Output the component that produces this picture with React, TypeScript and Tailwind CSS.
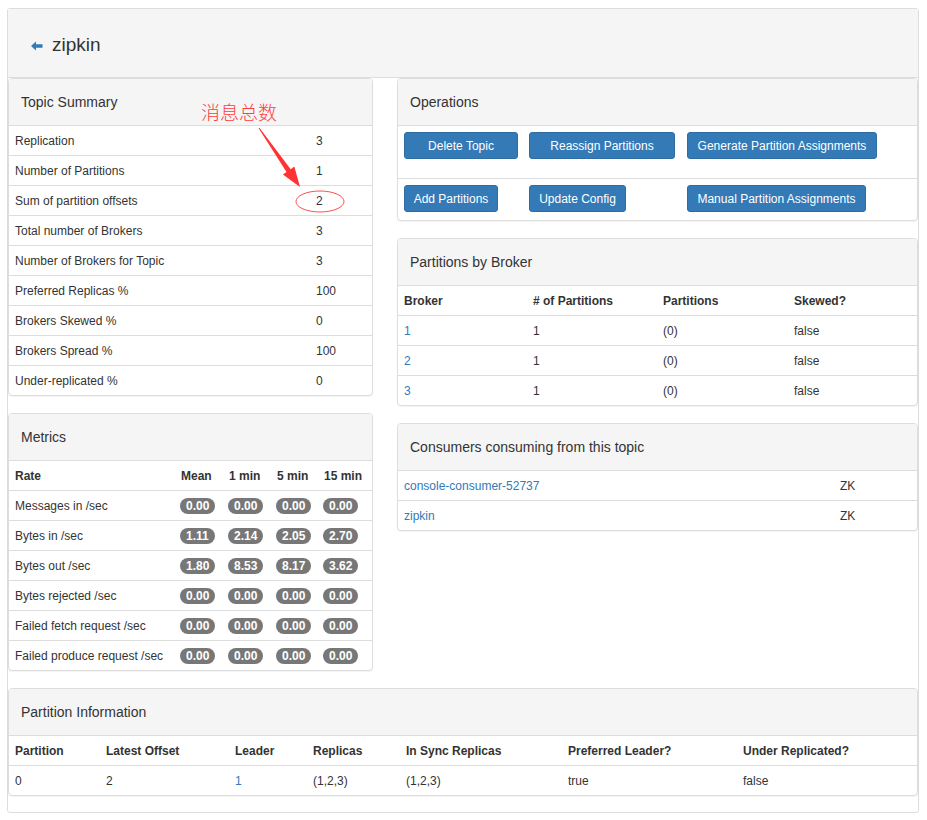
import React from 'react';

const summary: [string, string][] = [
    ['Replication', '3'],
    ['Number of Partitions', '1'],
    ['Sum of partition offsets', '2'],
    ['Total number of Brokers', '3'],
    ['Number of Brokers for Topic', '3'],
    ['Preferred Replicas %', '100'],
    ['Brokers Skewed %', '0'],
    ['Brokers Spread %', '100'],
    ['Under-replicated %', '0'],
];

const metrics: [string, string[]][] = [
    ['Messages in /sec', ['0.00', '0.00', '0.00', '0.00']],
    ['Bytes in /sec', ['1.11', '2.14', '2.05', '2.70']],
    ['Bytes out /sec', ['1.80', '8.53', '8.17', '3.62']],
    ['Bytes rejected /sec', ['0.00', '0.00', '0.00', '0.00']],
    ['Failed fetch request /sec', ['0.00', '0.00', '0.00', '0.00']],
    ['Failed produce request /sec', ['0.00', '0.00', '0.00', '0.00']],
];

const btn = 'h-[27px] rounded-[3px] bg-[#337ab7] border border-[#2e6da4] text-white text-[12px] flex items-center justify-center';

function Panel({ title, children }: { title: string; children: React.ReactNode }) {
    return (
        <div className="border border-[#ddd] rounded-[4px] bg-white shadow-[0_1px_1px_rgba(0,0,0,0.05)] overflow-hidden">
            <div className="h-[47px] bg-[#f5f5f5] border-b border-[#ddd] flex items-center pl-[12px] text-[14px]">
                {title}
            </div>
            {children}
        </div>
    );
}

function Row({ cols, children, head }: { cols: string; children: React.ReactNode; head?: boolean }) {
    return (
        <div className={`grid ${cols} h-[30px] items-center border-b border-[#ddd] last:border-b-0 last:h-[29px] ${head ? 'font-bold' : ''}`}>
            {children}
        </div>
    );
}

function Badge({ v }: { v: string }) {
    return (
        <span className="inline-block bg-[#777] text-white font-bold text-[12px] leading-none rounded-[10px] px-[6px] py-[2px]">
            {v}
        </span>
    );
}

export default function App() {
    return (
        <div className="min-h-[820px] bg-white pt-[8px] pb-[8px] pl-[7px] pr-[8px] text-[12px] text-[#333] font-['Liberation_Sans',Arial,sans-serif]">
            <div className="border border-[#ddd] rounded-[3px] bg-white relative">
                {/* Title */}
                <div className="h-[69px] bg-[#f5f5f5] border-b border-[#ddd] flex items-center pl-[23px] pt-[5px] gap-[9px]">
                    <svg width="12" height="10" viewBox="0 0 12 10" className="mt-[1px]">
                        <path d="M0 5 L5 0.5 L5 3.3 L11.5 3.3 L11.5 6.7 L5 6.7 L5 9.5 Z" fill="#337ab7" />
                    </svg>
                    <span className="text-[19px]">zipkin</span>
                </div>

                <div className="flex gap-[24px]">
                    {/* Left column */}
                    <div className="w-[365px] flex flex-col gap-[17px]">
                        <div className="relative">
                            <Panel title="Topic Summary">
                                {summary.map(([k, v]) => (
                                    <Row key={k} cols="grid-cols-[301px_1fr]">
                                        <span className="pl-[6px]">{k}</span>
                                        <span className="pl-[6px]">{v}</span>
                                    </Row>
                                ))}
                            </Panel>
                            {/* annotation */}
                            <span className="absolute left-[193px] top-[24px] text-[19px] leading-none text-[#ff3d3d] font-['Noto_Sans_CJK_SC',sans-serif] font-light">
                                消息总数
                            </span>
                            <svg className="absolute left-0 top-0 pointer-events-none" width="365" height="140">
                                <polygon
                                    points="251.4,49.7 282.7,91.2 286.3,88.6 292,109 274.9,96.6 278.5,94 250.6,50.3"
                                    fill="#ff3333"
                                />
                                <ellipse cx="312" cy="123.5" rx="24" ry="10.5" fill="none" stroke="#ff4d4d" strokeWidth="1" />
                            </svg>
                        </div>

                        <Panel title="Metrics">
                            <Row cols="grid-cols-[166px_48px_48px_47px_1fr]" head>
                                <span className="pl-[6px]">Rate</span>
                                <span className="pl-[6px]">Mean</span>
                                <span className="pl-[6px]">1 min</span>
                                <span className="pl-[6px]">5 min</span>
                                <span className="pl-[6px]">15 min</span>
                            </Row>
                            {metrics.map(([k, vals]) => (
                                <Row key={k} cols="grid-cols-[166px_48px_48px_47px_1fr]">
                                    <span className="pl-[6px]">{k}</span>
                                    {vals.map((v, i) => (
                                        <span key={i} className="pl-[5px]">
                                            <Badge v={v} />
                                        </span>
                                    ))}
                                </Row>
                            ))}
                        </Panel>
                    </div>

                    {/* Right column */}
                    <div className="flex-1 flex flex-col gap-[17px]">
                        <Panel title="Operations">
                            <div className="h-[53px] border-b border-[#ddd] grid grid-cols-[125px_158px_1fr] pt-[6px] pl-[6px]">
                                <div className={`${btn} w-[114px]`}>Delete Topic</div>
                                <div className={`${btn} w-[146px]`}>Reassign Partitions</div>
                                <div className={`${btn} w-[190px]`}>Generate Partition Assignments</div>
                            </div>
                            <div className="h-[41px] grid grid-cols-[125px_158px_1fr] pt-[6px] pl-[6px]">
                                <div className={`${btn} w-[94px]`}>Add Partitions</div>
                                <div className={`${btn} w-[97px]`}>Update Config</div>
                                <div className={`${btn} w-[179px]`}>Manual Partition Assignments</div>
                            </div>
                        </Panel>

                        <Panel title="Partitions by Broker">
                            <Row cols="grid-cols-[129px_130px_131px_1fr]" head>
                                <span className="pl-[6px]">Broker</span>
                                <span className="pl-[6px]"># of Partitions</span>
                                <span className="pl-[6px]">Partitions</span>
                                <span className="pl-[6px]">Skewed?</span>
                            </Row>
                            {['1', '2', '3'].map((b) => (
                                <Row key={b} cols="grid-cols-[129px_130px_131px_1fr]">
                                    <span className="pl-[6px] text-[#337ab7]">{b}</span>
                                    <span className="pl-[6px]">1</span>
                                    <span className="pl-[6px]">(0)</span>
                                    <span className="pl-[6px]">false</span>
                                </Row>
                            ))}
                        </Panel>

                        <Panel title="Consumers consuming from this topic">
                            {['console-consumer-52737', 'zipkin'].map((c) => (
                                <Row key={c} cols="grid-cols-[436px_1fr]">
                                    <span className="pl-[6px] text-[#337ab7]">{c}</span>
                                    <span className="pl-[6px]">ZK</span>
                                </Row>
                            ))}
                        </Panel>
                    </div>
                </div>

                {/* Partition Information */}
                <div className="mt-[17px] mb-[16px]">
                    <Panel title="Partition Information">
                        <Row cols="grid-cols-[91px_129px_78px_93px_162px_175px_1fr]" head>
                            <span className="pl-[6px]">Partition</span>
                            <span className="pl-[6px]">Latest Offset</span>
                            <span className="pl-[6px]">Leader</span>
                            <span className="pl-[6px]">Replicas</span>
                            <span className="pl-[6px]">In Sync Replicas</span>
                            <span className="pl-[6px]">Preferred Leader?</span>
                            <span className="pl-[6px]">Under Replicated?</span>
                        </Row>
                        <Row cols="grid-cols-[91px_129px_78px_93px_162px_175px_1fr]">
                            <span className="pl-[6px]">0</span>
                            <span className="pl-[6px]">2</span>
                            <span className="pl-[6px] text-[#337ab7]">1</span>
                            <span className="pl-[6px]">(1,2,3)</span>
                            <span className="pl-[6px]">(1,2,3)</span>
                            <span className="pl-[6px]">true</span>
                            <span className="pl-[6px]">false</span>
                        </Row>
                    </Panel>
                </div>
            </div>
        </div>
    );
}
